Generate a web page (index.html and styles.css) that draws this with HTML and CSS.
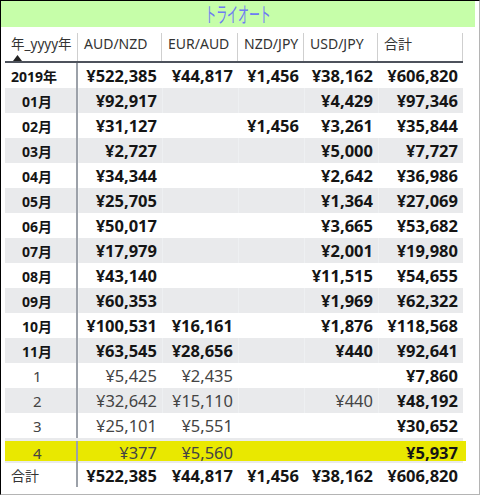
FILE: index.html
```html
<!DOCTYPE html>
<html lang="ja">
<head>
<meta charset="utf-8">
<link rel="stylesheet" href="styles.css">
</head>
<body>
<div class="frame">
  <div class="title"><span class="title-text">トライオート</span></div>
  <div class="table">
    <div class="row head">
      <div class="c lab"><span class="htxt">年_yyyy年</span><svg class="sort" width="9" height="6" viewBox="0 0 9 6"><path d="M0 6 L4.5 0 L9 6 Z" fill="#222"/></svg></div>
      <div class="c">AUD/NZD</div>
      <div class="c">EUR/AUD</div>
      <div class="c">NZD/JPY</div>
      <div class="c">USD/JPY</div>
      <div class="c">合計</div>
    </div>
    <div class="row b">
      <div class="c lab l0">2019年</div>
      <div class="c">¥522,385</div><div class="c">¥44,817</div><div class="c">¥1,456</div><div class="c">¥38,162</div><div class="c">¥606,820</div>
    </div>
    <div class="row b alt">
      <div class="c lab l1">01月</div>
      <div class="c">¥92,917</div><div class="c"></div><div class="c"></div><div class="c">¥4,429</div><div class="c">¥97,346</div>
    </div>
    <div class="row b">
      <div class="c lab l1">02月</div>
      <div class="c">¥31,127</div><div class="c"></div><div class="c">¥1,456</div><div class="c">¥3,261</div><div class="c">¥35,844</div>
    </div>
    <div class="row b alt">
      <div class="c lab l1">03月</div>
      <div class="c">¥2,727</div><div class="c"></div><div class="c"></div><div class="c">¥5,000</div><div class="c">¥7,727</div>
    </div>
    <div class="row b">
      <div class="c lab l1">04月</div>
      <div class="c">¥34,344</div><div class="c"></div><div class="c"></div><div class="c">¥2,642</div><div class="c">¥36,986</div>
    </div>
    <div class="row b alt">
      <div class="c lab l1">05月</div>
      <div class="c">¥25,705</div><div class="c"></div><div class="c"></div><div class="c">¥1,364</div><div class="c">¥27,069</div>
    </div>
    <div class="row b">
      <div class="c lab l1">06月</div>
      <div class="c">¥50,017</div><div class="c"></div><div class="c"></div><div class="c">¥3,665</div><div class="c">¥53,682</div>
    </div>
    <div class="row b alt">
      <div class="c lab l1">07月</div>
      <div class="c">¥17,979</div><div class="c"></div><div class="c"></div><div class="c">¥2,001</div><div class="c">¥19,980</div>
    </div>
    <div class="row b">
      <div class="c lab l1">08月</div>
      <div class="c">¥43,140</div><div class="c"></div><div class="c"></div><div class="c">¥11,515</div><div class="c">¥54,655</div>
    </div>
    <div class="row b alt">
      <div class="c lab l1">09月</div>
      <div class="c">¥60,353</div><div class="c"></div><div class="c"></div><div class="c">¥1,969</div><div class="c">¥62,322</div>
    </div>
    <div class="row b">
      <div class="c lab l1">10月</div>
      <div class="c">¥100,531</div><div class="c">¥16,161</div><div class="c"></div><div class="c">¥1,876</div><div class="c">¥118,568</div>
    </div>
    <div class="row b alt">
      <div class="c lab l1">11月</div>
      <div class="c">¥63,545</div><div class="c">¥28,656</div><div class="c"></div><div class="c">¥440</div><div class="c">¥92,641</div>
    </div>
    <div class="row n">
      <div class="c lab l2">1</div>
      <div class="c">¥5,425</div><div class="c">¥2,435</div><div class="c"></div><div class="c"></div><div class="c tot">¥7,860</div>
    </div>
    <div class="row n alt">
      <div class="c lab l2">2</div>
      <div class="c">¥32,642</div><div class="c">¥15,110</div><div class="c"></div><div class="c">¥440</div><div class="c tot">¥48,192</div>
    </div>
    <div class="row n">
      <div class="c lab l2">3</div>
      <div class="c">¥25,101</div><div class="c">¥5,551</div><div class="c"></div><div class="c"></div><div class="c tot">¥30,652</div>
    </div>
    <div class="row n alt sel">
      <div class="inner">
        <div class="c lab l2">4</div>
        <div class="c">¥377</div><div class="c">¥5,560</div><div class="c"></div><div class="c"></div><div class="c tot">¥5,937</div>
      </div>
    </div>
    <div class="row b total">
      <div class="c lab l0">合計</div>
      <div class="c">¥522,385</div><div class="c">¥44,817</div><div class="c">¥1,456</div><div class="c">¥38,162</div><div class="c">¥606,820</div>
    </div>
  </div>
</div>
</body>
</html>
```

FILE: styles.css
```css
html, body {
  margin: 0;
  padding: 0;
  background: #ffffff;
}
body {
  font-family: "Noto Sans", "Noto Sans CJK JP", sans-serif;
  color: #1a1a1a;
}
.frame {
  width: 480px;
  height: 495px;
  box-sizing: border-box;
  border-left: 1px solid #000000;
  border-top: 1px solid #000000;
  border-right: 1px solid #b4b4b4;
  border-bottom: 1px solid #b4b4b4;
  overflow: hidden;
}
.title {
  width: 474px;
  height: 26px;
  background: #c6fea9;
  display: flex;
  justify-content: center;
  align-items: center;
}
.title-text {
  display: inline-block;
  font-size: 21px;
  color: #6e7cf2;
  transform: scaleX(0.52);
  line-height: 26px;
}
.table {
  margin: 6px 0 0 4px;
  width: 458px;
}
.row {
  display: grid;
  grid-template-columns: 73px 84px 76px 66px 74px 85px;
  height: 25px;
  align-items: stretch;
}
.row .c {
  display: flex;
  align-items: center;
  justify-content: flex-end;
  padding: 0 5px 0 0;
  white-space: nowrap;
  box-sizing: border-box;
}
.row .c.lab {
  justify-content: flex-start;
  padding: 0;
  border-right: 2px solid #9ca1a9;
  font-size: 14px;
}
.head {
  height: 28px;
  border-bottom: 2px solid #4d525c;
}
.head .c {
  justify-content: flex-start;
  align-items: flex-start;
  padding: 2px 0 0 6px;
  font-size: 14px;
  line-height: 18px;
  color: #333333;
  border-right: 1px solid #cfcfcf;
}
.row.head .c.lab {
  flex-direction: column;
  justify-content: flex-start;
  align-items: flex-start;
  padding: 2px 0 0 6px;
  border-right: 1px solid #cfcfcf;
  font-size: 13.5px;
}
.htxt {
  display: block;
  line-height: 18px;
}
.sort {
  display: block;
  flex: none;
  margin: 2px 0 0 2px;
}
.b .c {
  font-weight: 700;
  font-size: 16.5px;
  color: #151515;
}
.b .c.lab {
  font-size: 14px;
}
.n .c {
  font-size: 16.5px;
  color: #444444;
}
.n .c.tot {
  font-weight: 700;
  color: #151515;
}
.alt {
  background: #e9eaec;
}
.alt .c + .c {
  border-left: 1px solid #eef0f2;
}
.row .c.lab.l0 { padding-left: 6px; }
.row .c.lab.l1 { padding-left: 17px; }
.row .c.lab.l2 {
  padding-left: 28px;
  font-weight: 400;
  color: #444444;
  font-size: 15px;
}
.total .c.lab {
  font-weight: 400;
  color: #333333;
  font-size: 14px;
  height: 24px;
}
.sel {
  display: block;
  padding: 3px 0 2px 0;
  box-sizing: border-box;
}
.sel .inner {
  display: grid;
  grid-template-columns: 73px 84px 76px 66px 74px 85px;
  height: 20px;
  background: #e9e800;
  margin-right: -3px;
  width: 461px;
}
.sel .inner .c + .c {
  border-left: none;
}
```
